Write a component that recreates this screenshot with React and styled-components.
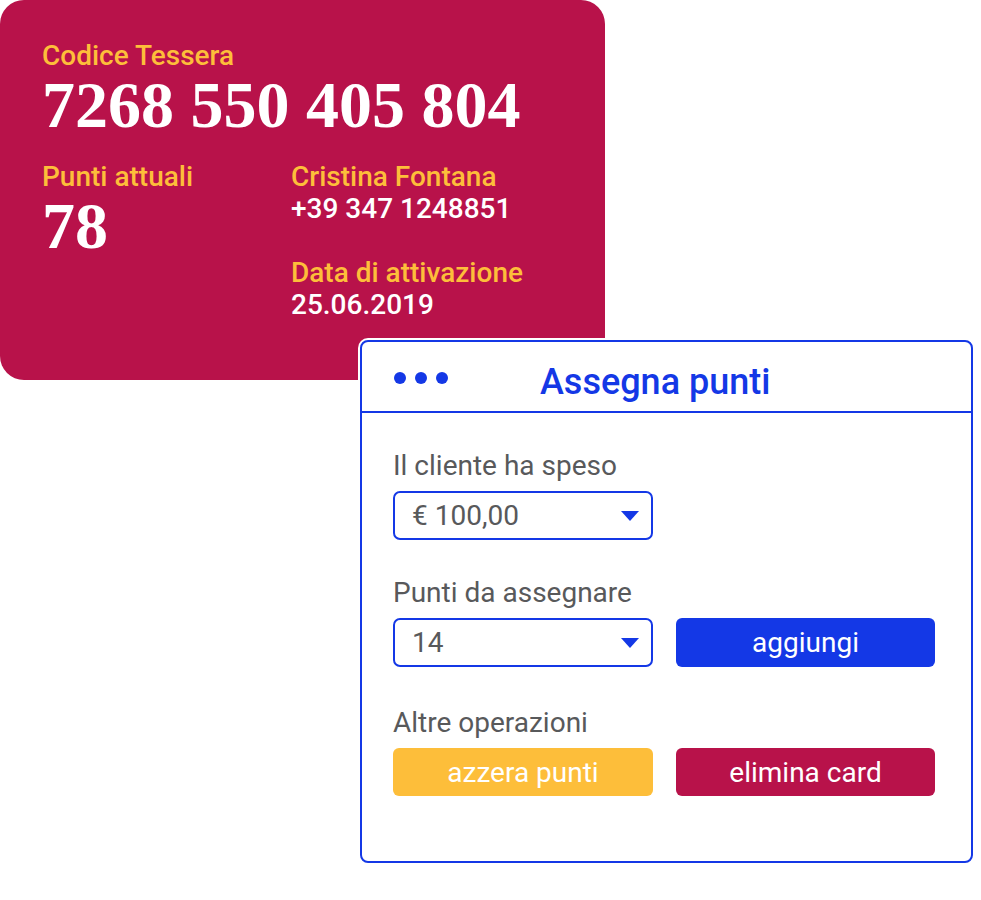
import React from 'react';
import styled, { createGlobalStyle } from 'styled-components';

const GlobalStyle = createGlobalStyle`
  body {
    margin: 0;
    background: #FFFFFF;
    font-family: Roboto, "Liberation Sans", sans-serif;
  }
`;

const StyledStage = styled.div`
  display: grid;
  grid-template-columns: 360px 245px 368px;
  grid-template-rows: 340px 40px 483px;
  width: 981px;
  height: 900px;
`;

const StyledCard = styled.div`
  grid-column: 1 / 3;
  grid-row: 1 / 3;
  box-sizing: border-box;

  display: grid;
  grid-template-columns: 249px 1fr;
  align-content: start;

  padding: 40px 0 0 42px;
  border-radius: 24px;

  background-color: #B8124A;
`;

const StyledCardHead = styled.div`
  grid-column: 1 / 3;
  margin-bottom: 23px;
`;

const StyledLabel = styled.div`
  margin-top: ${({ $gap }) => $gap || 0}px;

  font-weight: 500;
  font-size: 28px;
  line-height: 32px;
  color: #FDBE3A;
`;

const StyledValue = styled.div`
  font-weight: 500;
  font-size: 28px;
  line-height: 32px;
  color: #FFFFFF;
`;

const StyledBigNumber = styled.div`
  font-family: "Liberation Serif", "Times New Roman", serif;
  font-weight: 700;
  font-size: 66px;
  line-height: 66px;
  color: #FFFFFF;
  white-space: nowrap;
`;

const StyledPanel = styled.div`
  grid-column: 2 / 4;
  grid-row: 2 / 4;
  z-index: 1;
  box-sizing: border-box;

  display: flex;
  flex-direction: column;

  border: 2px solid #1438E6;
  border-radius: 8px;
  box-shadow: 0 0 0 2px #FFFFFF;

  background-color: #FFFFFF;
`;

const StyledPanelHeader = styled.div`
  display: flex;
  align-items: center;
  gap: 92px;
  box-sizing: border-box;

  height: 71px;
  padding: 2px 0 0 32px;
  border-bottom: 2px solid #1438E6;
`;

const StyledDots = styled.div`
  display: flex;
  gap: 9px;
`;

const StyledDot = styled.span`
  width: 12px;
  height: 12px;
  border-radius: 50%;
  background-color: #1438E6;
`;

const StyledTitle = styled.h1`
  margin: 8px 0 0;

  font-weight: 500;
  font-size: 36px;
  line-height: 40px;
  color: #1438E6;
`;

const StyledPanelBody = styled.div`
  display: flex;
  flex-direction: column;
  padding: 37px 0 0 31px;
`;

const StyledSection = styled.div`
  margin-top: ${({ $gap }) => $gap || 0}px;
`;

const StyledFieldLabel = styled.div`
  margin-bottom: 9px;

  font-size: 28px;
  line-height: 32px;
  color: #58595B;
`;

const StyledRow = styled.div`
  display: grid;
  grid-template-columns: 260px 259px;
  gap: 23px;
`;

const StyledSelect = styled.div`
  display: flex;
  align-items: center;
  justify-content: space-between;
  box-sizing: border-box;

  height: 49px;
  padding: 0 12px 0 17px;
  border: 2px solid #1438E6;
  border-radius: 7px;

  font-size: 28px;
  color: #58595B;
`;

const StyledButton = styled.button`
  box-sizing: border-box;
  height: ${({ $height }) => $height || 49}px;
  padding: 0;
  border: none;
  border-radius: 6px;

  font-family: Roboto, "Liberation Sans", sans-serif;
  font-size: 28px;
  color: #FFFFFF;

  background-color: ${({ $color }) => $color};
`;

const Caret = () => (
  <svg width="18" height="10" viewBox="0 0 18 10">
    <path d="M0 0H18L9 10Z" fill="#1438E6" />
  </svg>
);

const Select = ({ value }) => (
  <StyledSelect>
    <span>{value}</span>
    <Caret />
  </StyledSelect>
);

export default function App() {
  return (
    <>
      <GlobalStyle />
      <StyledStage>
        <StyledCard>
          <StyledCardHead>
            <StyledLabel>Codice Tessera</StyledLabel>
            <StyledBigNumber>7268 550 405 804</StyledBigNumber>
          </StyledCardHead>
          <div>
            <StyledLabel>Punti attuali</StyledLabel>
            <StyledBigNumber>78</StyledBigNumber>
          </div>
          <div>
            <StyledLabel>Cristina Fontana</StyledLabel>
            <StyledValue>+39 347 1248851</StyledValue>
            <StyledLabel $gap={32}>Data di attivazione</StyledLabel>
            <StyledValue>25.06.2019</StyledValue>
          </div>
        </StyledCard>

        <StyledPanel>
          <StyledPanelHeader>
            <StyledDots>
              <StyledDot />
              <StyledDot />
              <StyledDot />
            </StyledDots>
            <StyledTitle>Assegna punti</StyledTitle>
          </StyledPanelHeader>
          <StyledPanelBody>
            <StyledSection>
              <StyledFieldLabel>Il cliente ha speso</StyledFieldLabel>
              <StyledRow>
                <Select value="€ 100,00" />
              </StyledRow>
            </StyledSection>
            <StyledSection $gap={37}>
              <StyledFieldLabel>Punti da assegnare</StyledFieldLabel>
              <StyledRow>
                <Select value="14" />
                <StyledButton $color="#1438E6">aggiungi</StyledButton>
              </StyledRow>
            </StyledSection>
            <StyledSection $gap={40}>
              <StyledFieldLabel>Altre operazioni</StyledFieldLabel>
              <StyledRow>
                <StyledButton $color="#FDBE3A" $height={48}>azzera punti</StyledButton>
                <StyledButton $color="#B8124A" $height={48}>elimina card</StyledButton>
              </StyledRow>
            </StyledSection>
          </StyledPanelBody>
        </StyledPanel>
      </StyledStage>
    </>
  );
}
